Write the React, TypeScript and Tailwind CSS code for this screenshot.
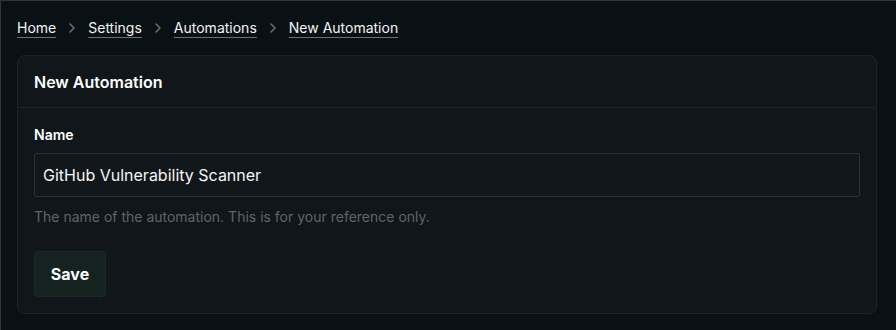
import { ChevronRight } from 'lucide-react';

const crumbs = ['Home', 'Settings', 'Automations', 'New Automation'];

const App = () => {
  return (
    <div
      className="min-h-[330px] w-full bg-[#0a1115] border-t border-l border-[#36313a] px-4 pt-[17px] text-white"
      style={{ fontFamily: 'Inter, "Noto Sans", sans-serif' }}
    >
      {/* Breadcrumb */}
      <nav className="flex items-center gap-2 text-[14px] leading-5">
        {crumbs.map((c, i) => (
          <div key={c} className="flex items-center gap-2">
            {i > 0 && <ChevronRight className="w-4 h-4 text-[#6b7276]" strokeWidth={2.25} />}
            <a className="underline decoration-[#6b7276] underline-offset-[4px] text-[#f3f4f4]">{c}</a>
          </div>
        ))}
      </nav>

      {/* Card */}
      <div className="mt-[17px] mr-[3px] rounded-lg border border-[#1d2427] bg-[#101619]">
        <div className="px-4 h-[52px] flex items-center border-b border-[#1d2427]">
          <h2 className="font-semibold text-[16px] text-white">New Automation</h2>
        </div>
        <div className="px-4 pt-[17px] pb-4">
          <label className="block text-[14px] font-semibold leading-5 text-white">Name</label>
          <div className="mt-[8px] h-[44px] w-full rounded-[2px] border border-[#2c3336] bg-[#11171a] flex items-center px-[8px] text-[16px] text-[#f5f6f6]">
            GitHub Vulnerability Scanner
          </div>
          <p className="mt-[10px] text-[14px] text-[#5d6669] leading-5">
            The name of the automation. This is for your reference only.
          </p>
          <button className="mt-[24px] h-[46px] w-[72px] rounded-[4px] border border-[#1c2a28] bg-[#142320] text-[16px] font-bold text-white">
            Save
          </button>
        </div>
      </div>
    </div>
  );
};

export default App;
